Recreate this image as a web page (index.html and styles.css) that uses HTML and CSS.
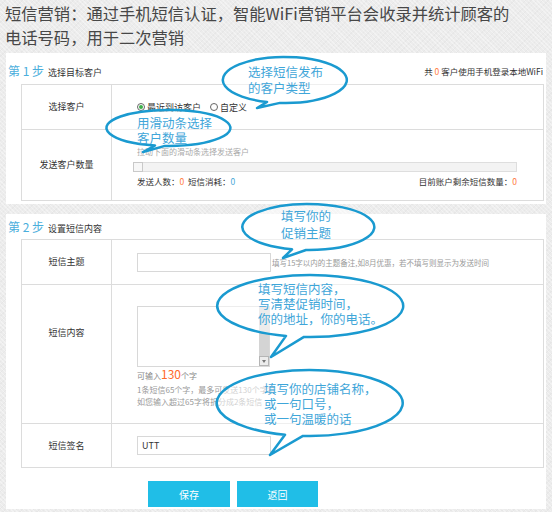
FILE: index.html
```html
<!DOCTYPE html>
<html lang="zh-CN">
<head>
<meta charset="utf-8">
<title>短信营销</title>
<link rel="stylesheet" href="styles.css">
</head>
<body>
<div class="page">
  <div class="title">短信营销：通过手机短信认证，智能WiFi营销平台会收录并统计顾客的<br>电话号码，用于二次营销</div>

  <div class="panel p1">
    <div class="head h1">
      <div class="step"><span class="stepno">第 1 步</span><span class="steptxt">选择目标客户</span></div>
      <div class="count">共 <span class="org">0</span> 客户使用手机登录本地WiFi</div>
    </div>
    <div class="tbl">
      <div class="row r1a">
        <div class="lab">选择客户</div>
        <div class="cell radios">
          <span class="radio"><span class="dot on"></span>最近到访客户</span>
          <span class="radio"><span class="dot"></span>自定义</span>
        </div>
      </div>
      <div class="row r1b">
        <div class="lab">发送客户数量</div>
        <div class="cell slider-cell">
          <div class="hint">拉动下面的滑动条选择发送客户</div>
          <div class="track"><div class="handle"></div></div>
          <div class="stats">
            <span>发送人数：<span class="org">0</span>&nbsp;&nbsp;短信消耗：<span class="blu">0</span></span>
            <span>目前账户剩余短信数量：<span class="org">0</span></span>
          </div>
        </div>
      </div>
    </div>
  </div>

  <div class="panel p2">
    <div class="head h2">
      <div class="step"><span class="stepno">第 2 步</span><span class="steptxt">设置短信内容</span></div>
    </div>
    <div class="tbl">
      <div class="row r2a">
        <div class="lab">短信主题</div>
        <div class="cell inline-cell">
          <div class="input"></div>
          <div class="hint2">填写15字以内的主题备注,如8月优惠，若不填写则显示为发送时间</div>
        </div>
      </div>
      <div class="row r2b">
        <div class="lab lab-top">短信内容</div>
        <div class="cell content-cell">
          <div class="textarea"><div class="sb"><div class="sb-btn"></div></div></div>
          <div class="note n1">可输入<span class="big">130</span>个字</div>
          <div class="note n2">1条短信65个字，最多可发送130个字符</div>
          <div class="note n3">如您输入超过65字将折分成2条短信</div>
        </div>
      </div>
      <div class="row r2c">
        <div class="lab">短信签名</div>
        <div class="cell inline-cell">
          <div class="input filled">UTT</div>
        </div>
      </div>
    </div>
    <div class="btns">
      <div class="btn save">保存</div>
      <div class="btn back">返回</div>
    </div>
  </div>

  <div class="bubble b1">
    <svg width="130" height="58" viewBox="0 0 130 58"><path d="M47,47 A62,23 0 1 1 60,47.9 L37,53 Z"/></svg>
    <div class="btext">选择短信发布<br>的客户类型</div>
  </div>
  <div class="bubble b2">
    <svg width="130" height="46" viewBox="0 0 130 46"><path d="M50,38.5 A62,18 0 1 1 60,38.9 L38,45 Z"/></svg>
    <div class="btext">用滑动条选择<br>客户数量</div>
  </div>
  <div class="bubble b3">
    <svg width="136" height="60" viewBox="0 0 136 60"><path d="M52,47.3 A66,23 0 1 1 66,48 L43,56 Z"/></svg>
    <div class="btext">填写你的<br>促销主题</div>
  </div>
  <div class="bubble b4">
    <svg width="190" height="88" viewBox="0 0 190 88"><path d="M70,62.9 A93,31 0 1 1 88,63.9 L55,84 Z"/></svg>
    <div class="btext">填写短信内容，<br>写清楚促销时间，<br>你的地址，你的电话。</div>
  </div>
  <div class="bubble b5">
    <svg width="190" height="90" viewBox="0 0 190 90"><path d="M70,66.8 A93,33 0 1 1 88,67.9 L55,87 Z"/></svg>
    <div class="btext">填写你的店铺名称，<br>或一句口号，<br>或一句温暖的话</div>
  </div>
</div>
</body>
</html>
```

FILE: styles.css
```css
* { box-sizing: border-box; }

html, body {
  margin: 0;
  padding: 0;
}

body {
  font-family: "Noto Sans CJK SC", "Noto Sans", sans-serif;
  background-color: #ececec;
  background-image:
    repeating-linear-gradient(45deg, rgba(255,255,255,0.35) 0 1px, transparent 1px 3px),
    repeating-linear-gradient(-45deg, rgba(0,0,0,0.025) 0 1px, transparent 1px 4px);
  color: #333;
}

.page {
  position: relative;
  width: 552px;
  height: 512px;
  overflow: hidden;
}

.title {
  height: 49px;
  padding: 1px 0 0 5px;
  font-size: 16.3px;
  line-height: 24px;
  color: #474747;
  white-space: nowrap;
}

.panel {
  margin: 4px 6px 0;
  background: #fff;
}

.p1 { padding-bottom: 3px; }
.p2 { margin-top: 10px; padding-bottom: 2px; }

.head {
  display: flex;
  align-items: center;
  justify-content: space-between;
  padding: 0 3px 0 2px;
}
.h1 { height: 31px; padding-top: 4px; }
.h2 { height: 25px; }

.step { display: flex; align-items: baseline; }
.stepno {
  font-size: 12px;
  color: #4aaedc;
  line-height: 16px;
}
.steptxt {
  font-size: 9px;
  color: #333;
  margin-left: 4px;
}

.count {
  font-size: 8.5px;
  color: #333;
}

.org { color: #ff7a3d; }
.blu { color: #4aa8d8; }

.tbl {
  margin: 0 2px 0 15px;
  border: 1px solid #dcdcdc;
}

.row {
  display: flex;
  border-top: 1px solid #dcdcdc;
}
.row:first-child { border-top: none; }

.lab {
  width: 90px;
  flex: none;
  border-right: 1px solid #dcdcdc;
  display: flex;
  align-items: center;
  justify-content: center;
  font-size: 9px;
  line-height: 12px;
  color: #333;
}
.lab-top {
  align-items: flex-start;
  padding-top: 42px;
}

.cell {
  flex: 1;
  min-width: 0;
}

.r1a { height: 44px; }
.r1b { height: 71px; }

.radios {
  display: flex;
  align-items: center;
  padding-left: 25px;
  font-size: 9px;
  color: #333;
}
.radio {
  display: flex;
  align-items: center;
  margin-right: 9px;
}
.dot {
  width: 8px;
  height: 8px;
  border: 1px solid #666;
  border-radius: 50%;
  margin-right: 2px;
  display: flex;
  align-items: center;
  justify-content: center;
}
.dot.on::after {
  content: "";
  width: 4px;
  height: 4px;
  border-radius: 50%;
  background: #3db04a;
}

.slider-cell {
  padding: 16px 26px 0 21px;
}
.hint {
  padding-left: 4px;
  font-size: 8px;
  line-height: 12px;
  color: #aaa;
}
.track {
  margin-top: 4px;
  height: 10px;
  border: 1px solid #dedede;
  background: #f3f3f3;
  display: flex;
}
.handle {
  width: 10px;
  height: 10px;
  margin: -1px 0 0 -1px;
  border: 1px solid #c9c9c9;
  background: #f7f7f7;
}
.stats {
  margin-top: 3px;
  padding-left: 4px;
  display: flex;
  justify-content: space-between;
  font-size: 8.5px;
  line-height: 12px;
  color: #333;
}

.r2a { height: 44px; }
.r2b { height: 139px; }
.r2c { height: 44px; }

.inline-cell {
  display: flex;
  align-items: center;
  padding-left: 25px;
}
.input {
  width: 134px;
  height: 19px;
  border: 1px solid #d8d8d8;
  background: #fff;
  flex: none;
}
.input.filled {
  font-size: 9px;
  line-height: 17px;
  padding-left: 4px;
  color: #333;
}
.hint2 {
  margin-left: 1px;
  font-size: 7.5px;
  color: #999;
  white-space: nowrap;
}

.content-cell {
  padding: 21px 0 0 25px;
}
.textarea {
  width: 133px;
  height: 61px;
  border: 1px solid #d8d8d8;
  display: flex;
  justify-content: flex-end;
}
.sb {
  width: 10px;
  background: #d4d4d4;
  display: flex;
  flex-direction: column;
  justify-content: flex-end;
}
.sb-btn {
  height: 10px;
  border: 1px solid #b5b5b5;
  background: #ececec;
  display: flex;
  align-items: center;
  justify-content: center;
}
.sb-btn::after {
  content: "";
  border-left: 2.5px solid transparent;
  border-right: 2.5px solid transparent;
  border-top: 3px solid #777;
}
.note {
  font-size: 8px;
  line-height: 12px;
  color: #999;
  white-space: nowrap;
}
.n1 { line-height: 13px; color: #888; }
.n2 { margin-top: 2px; }
.big {
  font-size: 12px;
  color: #ff6a2a;
}

.btns {
  display: flex;
  gap: 7px;
  margin-top: 13px;
  padding-left: 142px;
}
.btn {
  height: 26px;
  background: #20bee7;
  color: #fff;
  font-size: 10px;
  display: flex;
  align-items: center;
  justify-content: center;
}
.save { width: 82px; }
.back { width: 81px; }

.bubble { position: absolute; }
.bubble svg {
  position: absolute;
  left: 0;
  top: 0;
  overflow: visible;
}
.bubble path {
  fill: rgba(255,255,255,0.55);
  stroke: #1a9ad0;
  stroke-width: 2.5;
  stroke-linejoin: round;
}
.btext {
  position: absolute;
  font-size: 12.5px;
  line-height: 15px;
  color: #3fa6d9;
  white-space: nowrap;
}

.b1 { left: 220px; top: 55px; width: 130px; height: 58px; }
.b1 .btext { left: 28px; top: 9px; line-height: 16px; }

.b2 { left: 105px; top: 107px; width: 130px; height: 46px; }
.b2 .btext { left: 32px; top: 7.5px; }

.b3 { left: 240px; top: 202px; width: 136px; height: 60px; }
.b3 .btext { left: 41px; top: 4.5px; line-height: 17px; }

.b4 { left: 216px; top: 273px; width: 190px; height: 88px; }
.b4 .btext { left: 42px; top: 7.5px; }

.b5 { left: 215px; top: 368px; width: 190px; height: 90px; }
.b5 .btext { left: 49px; top: 12.5px; }
```
